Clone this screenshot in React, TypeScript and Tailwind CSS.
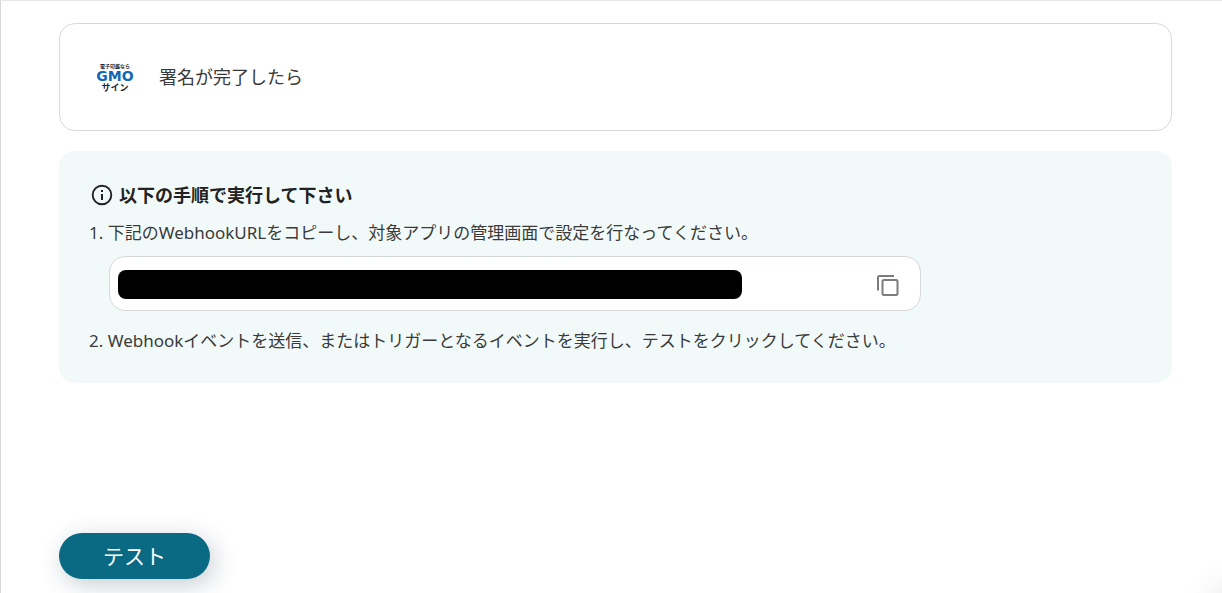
import { useId } from "react";

function GmoSignLogo() {
  return (
    <svg width="44" height="34" viewBox="0 0 44 34" role="img" aria-label="GMOサイン" className="shrink-0">
      <g fontFamily="'Noto Sans CJK JP', sans-serif" fontWeight="700" fill="#1c2536" textAnchor="middle">
        <text x="22" y="8" fontSize="5">電子印鑑なら</text>
        <text x="22" y="31" fontSize="9">サイン</text>
      </g>
      <text x="22" y="21" fontSize="14" fontFamily="'DejaVu Sans', 'Liberation Sans', sans-serif" fontWeight="700" fill="#0f68b4" textAnchor="middle">
        GMO
      </text>
    </svg>
  );
}

function InfoIcon() {
  return (
    <svg width="22" height="22" viewBox="0 0 22 22" fill="none" aria-hidden="true" className="shrink-0">
      <circle cx="11" cy="11" r="9.3" stroke="#222" strokeWidth="1.9" />
      <path d="M11 10v6" stroke="#222" strokeWidth="2" />
      <path d="M11 6v2" stroke="#222" strokeWidth="2" />
    </svg>
  );
}

function CopyIcon() {
  return (
    <svg width="24" height="24" viewBox="0 0 24 24" fill="none" stroke="#7c7c7c" strokeWidth="2" aria-hidden="true">
      <path d="M2 17.500V4.500Q2 3 3.500 3H18" />
      <rect x="6.500" y="7" width="15" height="15" rx="1.500" />
    </svg>
  );
}

export default function App() {
  const urlId = useId();
  return (
    <main className="relative flex min-h-screen flex-col items-start overflow-hidden border-t border-l border-t-[#e8e8e8] border-l-[#d8d8d8] bg-white pt-[22px] pr-[50px] pb-[14px] pl-[58px] font-['Noto_Sans','Noto_Sans_CJK_JP',sans-serif] text-[#3a3a3a]">
      <section className="flex h-[108px] w-full items-center gap-[22px] rounded-2xl border border-[#d9d9d9] px-[33px]">
        <GmoSignLogo />
        <p className="text-lg leading-6">署名が完了したら</p>
      </section>

      <section className="mt-5 w-full rounded-2xl bg-[#f2faf9] px-[30px] pt-8 pb-7">
        <h2 className="flex items-center gap-1.5 pl-0.5 text-lg leading-6 font-bold text-[#222]">
          <InfoIcon />
          以下の手順で実行して下さい
        </h2>
        <ol className="text-[17px] leading-7">
          <li className="mt-3">
            <label htmlFor={urlId}>1. 下記のWebhookURLをコピーし、対象アプリの管理画面で設定を行なってください。</label>
            <div className="mt-[9px] ml-5 flex h-[55px] max-w-[812px] items-center justify-between rounded-2xl border border-[#d5d9d9] bg-white pt-0.5 pr-5 pl-2">
              <input id={urlId} readOnly className="h-[29px] w-[624px] min-w-0 rounded-lg bg-black" />
              <button type="button" aria-label="コピー" className="shrink-0">
                <CopyIcon />
              </button>
            </div>
          </li>
          <li className="mt-4">2. Webhookイベントを送信、またはトリガーとなるイベントを実行し、テストをクリックしてください。</li>
        </ol>
      </section>

      <button type="button" className="mt-auto h-[46px] rounded-full bg-[#0a6a83] px-11 text-[21px] leading-6 text-white shadow-[4px_6px_24px_rgba(20,50,70,0.24)]">
        テスト
      </button>

      <div className="pointer-events-none absolute -right-16 -bottom-16 size-16 rounded-full shadow-[0_0_36px_12px_rgba(0,0,0,0.12)]" />
    </main>
  );
}
